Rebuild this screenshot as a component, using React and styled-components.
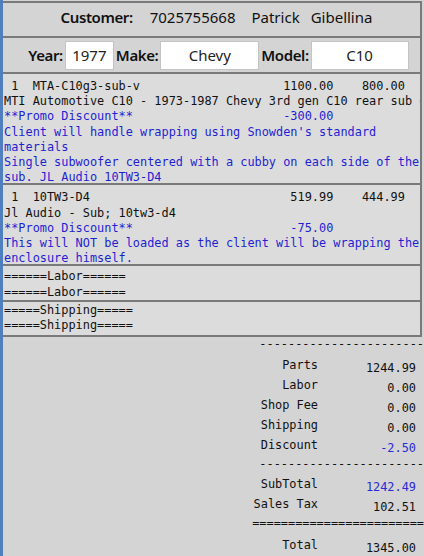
import React from "react";
import styled, { createGlobalStyle } from "styled-components";

const GlobalStyle = createGlobalStyle`
  body {
    margin: 0;
    background: #d4d4d4;
  }
`;

const Page = styled.div`
  min-height: 556px;
  padding-top: 1px;
  border-left: 3px solid #4f7fbf;
  background: #d4d4d4;
  font-family: "Noto Sans", "Open Sans", sans-serif;
  color: #111;
`;

const Box = styled.div`
  border-top: 2px solid #7a7a7a;
  border-right: 2px solid #7a7a7a;
  margin-right: 2px;
  background: ${(p) => (p.$light ? "#dcdcdc" : "#d4d4d4")};
`;

const HeaderRow = styled.div`
  height: 33px;
  box-sizing: border-box;
  padding: 0 0 5px 10px;
  display: flex;
  align-items: center;
  justify-content: center;
  gap: 14px;
  font-size: 15px;
`;

const Label = styled.span`
  font-weight: 600;
  letter-spacing: -0.4px;
`;

const Spaced = styled.span`
  margin-left: ${(p) => p.$gap || 0}px;
`;

const VehicleRow = styled.div`
  height: 34px;
  display: flex;
  align-items: center;
  justify-content: center;
  gap: 2px;
  font-size: 15px;
  padding-left: 14px;
`;

const Field = styled.input`
  width: ${(p) => p.$w}px;
  height: 29px;
  box-sizing: border-box;
  border: 1px solid #c4c4c4;
  background: #fff;
  font: inherit;
  text-align: center;
  color: #222;
  padding: 0;
`;

const Mono = styled.div`
  font-family: "DejaVu Sans Mono", "Liberation Mono", monospace;
  font-size: 11.9px;
  line-height: 15.2px;
  padding: ${(p) => p.$pad || "2px 0 0 1px"};
  margin-bottom: ${(p) => p.$pull || 0}px;
`;

const ItemHead = styled.div`
  display: grid;
  grid-template-columns: 39ch 7ch 10ch;
  white-space: pre;
`;

const Num = styled.span`
  text-align: right;
`;

const Line = styled.div`
  white-space: ${(p) => (p.$wrap ? "normal" : "pre")};
  overflow: hidden;
  color: ${(p) => (p.$blue ? "#1f1fd2" : "inherit")};
`;

const Promo = styled.div`
  display: grid;
  grid-template-columns: 39ch 7ch;
  color: #1f1fd2;
`;

const Totals = styled.div`
  font-family: "DejaVu Sans Mono", "Liberation Mono", monospace;
  font-size: 11.9px;
  border-top: 2px solid #7a7a7a;
  margin-right: 2px;
  display: grid;
  grid-template-columns: auto 104px;
  justify-content: end;
  padding-top: 1px;
`;

const Rule = styled.div`
  grid-column: 1 / 3;
  text-align: right;
  white-space: pre;
  margin-right: -2px;
  overflow: hidden;
  height: ${(p) => p.$h}px;
  line-height: 12px;
`;

const TotalLabel = styled.div`
  text-align: right;
  height: 20px;
  line-height: 15px;
`;

const TotalValue = styled.div`
  text-align: right;
  padding: 3px 6px 0 0;
  height: 20px;
  box-sizing: border-box;
  line-height: 15px;
  color: ${(p) => (p.$blue ? "#2a2ad8" : "#111")};
`;

const items = [
  {
    head: " 1  MTA-C10g3-sub-v",
    price: "1100.00",
    net: "800.00",
    desc: "MTI Automotive C10 - 1973-1987 Chevy 3rd gen C10 rear sub enclosure",
    promo: "-300.00",
    notes: [
      "Client will handle wrapping using Snowden's standard materials",
      "Single subwoofer centered with a cubby on each side of the sub. JL Audio 10TW3-D4",
    ],
  },
  {
    head: " 1  10TW3-D4",
    price: "519.99",
    net: "444.99",
    desc: "Jl Audio - Sub; 10tw3-d4",
    promo: "-75.00",
    notes: [
      "This will NOT be loaded as the client will be wrapping the enclosure himself.",
    ],
  },
];

const totals = [
  ["Parts", "1244.99"],
  ["Labor", "0.00"],
  ["Shop Fee", "0.00"],
  ["Shipping", "0.00"],
  ["Discount", "-2.50", true],
];

export default function App() {
  return (
    <Page>
      <GlobalStyle />
      <Box>
        <HeaderRow>
          <Label>Customer:</Label>
          <Spaced $gap={3}>7025755668</Spaced>
          <Spaced $gap={2}>Patrick</Spaced>
          <Spaced $gap={-3}>Gibellina</Spaced>
        </HeaderRow>
      </Box>
      <Box>
        <VehicleRow>
          <Label>Year:</Label>
          <Field $w={49} defaultValue="1977" readOnly />
          <Label>Make:</Label>
          <Field $w={99} defaultValue="Chevy" readOnly />
          <Label>Model:</Label>
          <Field $w={98} defaultValue="C10" readOnly />
        </VehicleRow>
      </Box>

      {items.map((it) => (
        <Box $light key={it.head}>
          <Mono $pad="5px 0 0 1px" $pull={-2}>
            <ItemHead>
              <span>{it.head}</span>
              <Num>{it.price}</Num>
              <Num>{it.net}</Num>
            </ItemHead>
            <Line>{it.desc}</Line>
            <Promo>
              <span>**Promo Discount**</span>
              <Num>{it.promo}</Num>
            </Promo>
            {it.notes.map((n) => (
              <Line $blue $wrap key={n}>
                {n}
              </Line>
            ))}
          </Mono>
        </Box>
      ))}

      <Box $light>
        <Mono $pad="3px 0 0 1px">
          <Line>======Labor======</Line>
          <Line>======Labor======</Line>
        </Mono>
      </Box>
      <Box $light>
        <Mono $pad="1px 0 2px 1px">
          <Line>=====Shipping=====</Line>
          <Line>=====Shipping=====</Line>
        </Mono>
      </Box>

      <Totals>
        <Rule $h={20}>{"-".repeat(23)}</Rule>
        {totals.map(([label, value, blue]) => (
          <React.Fragment key={label}>
            <TotalLabel>{label}</TotalLabel>
            <TotalValue $blue={blue}>{value}</TotalValue>
          </React.Fragment>
        ))}
        <Rule $h={19}>{"-".repeat(23)}</Rule>
        <TotalLabel>SubTotal</TotalLabel>
        <TotalValue $blue>1242.49</TotalValue>
        <TotalLabel>Sales Tax</TotalLabel>
        <TotalValue>102.51</TotalValue>
        <Rule $h={21}>{"=".repeat(24)}</Rule>
        <TotalLabel>Total</TotalLabel>
        <TotalValue>1345.00</TotalValue>
      </Totals>
    </Page>
  );
}
